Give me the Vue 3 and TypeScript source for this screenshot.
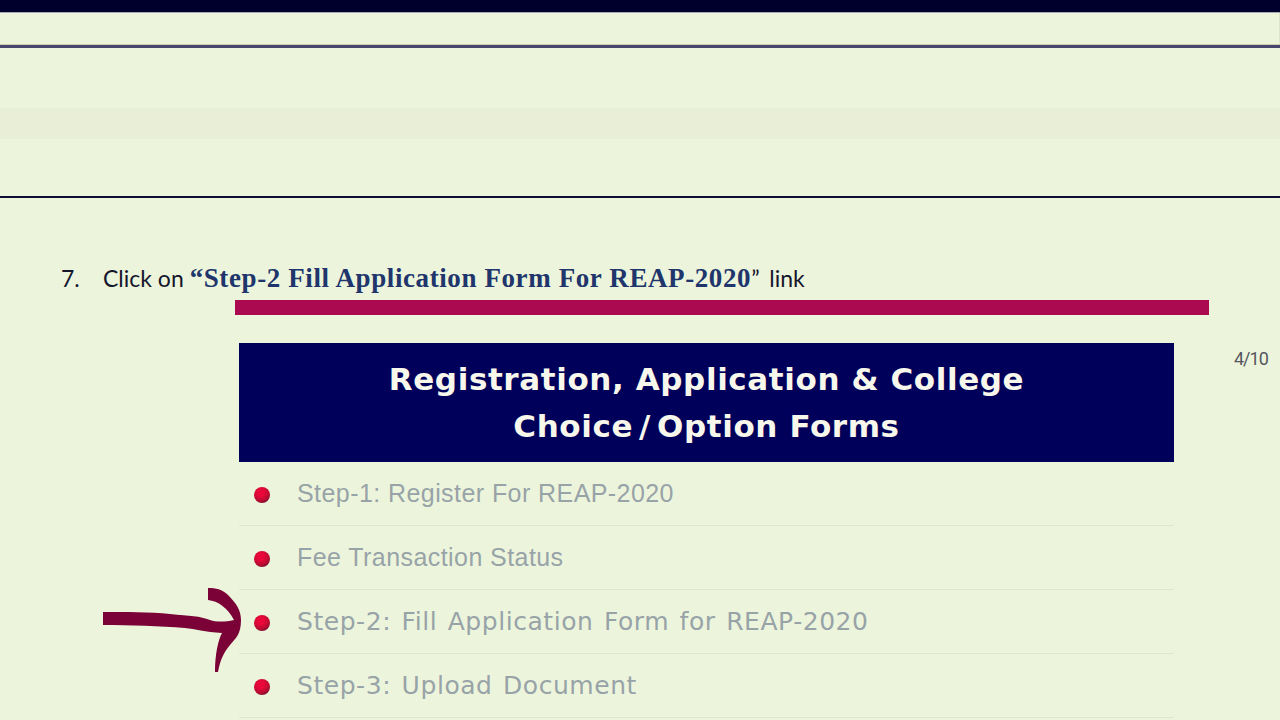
<script setup lang="ts">
interface Row { label: string; wide?: boolean; arrow?: boolean }
const rows: Row[] = [
  { label: 'Step-1: Register For REAP-2020' },
  { label: 'Fee Transaction Status' },
  { label: 'Step-2: Fill Application Form for REAP-2020', wide: true, arrow: true },
  { label: 'Step-3: Upload Document', wide: true },
]
</script>

<template>
  <div class="page">
    <div class="topbar"></div>
    <div class="band-a"></div>
    <div class="band-b"></div>
    <div class="band-c"></div>
    <div class="band-d"></div>
    <section class="content">
      <p class="instruction">
        <span class="num">7.</span>
        <span>Click on <b class="strong">“Step-2 Fill Application Form For REAP-2020</b>” <span class="link">link</span></span>
      </p>
      <div class="crimson"></div>
      <div class="panel">
        <h1 class="heading">Registration, Application &amp; College<br />Choice<span class="slash">/</span>Option Forms</h1>
        <ul class="list">
          <li v-for="row in rows" :key="row.label" class="row">
            <svg v-if="row.arrow" class="arrow" viewBox="100 585 145 90" width="145" height="90">
              <path d="M103 612 L103 625 C130 625 160 626 185 628 C195 629 205 632 222 633 C218 640 215 655 215 672 L218 672 C220 660 224 652 230 645 C236 638 241 634 241 620 C241 610 236 603 228 595 C222 589 216 588 208 588 L208 600 C218 601 228 608 234 620 C225 622 216 622 210 620 C200 616 190 616 170 614 C150 612 125 612 103 612 Z" fill="#7a0236" />
            </svg>
            <span class="bullet"></span>
            <span class="label" :class="{ wide: row.wide }">{{ row.label }}</span>
          </li>
        </ul>
      </div>
      <span class="pager">4/10</span>
    </section>
  </div>
</template>

<style>
html, body { margin: 0; overflow: hidden; background: #ecf5dc; }
</style>

<style scoped>
.page {
  width: 1280px;
  height: 720px;
  overflow: hidden;
  background: #ecf5dc;
  font-family: "Lato", sans-serif;
}
.topbar { height: 12px; background: #00002c; border-bottom: 1px solid #a9a9b4; }
.band-a {
  height: 32px;
  border-bottom: 3px solid #45456e;
  box-shadow: inset 0 -1px 0 #d0d0b0, inset -1px 0 0 #dde6c8;
}
.band-b { height: 60px; }
.band-c { height: 31px; background: #e9eed6; }
.band-d { height: 57px; border-bottom: 2px solid #0f0f35; }
.content { position: relative; }
.instruction {
  margin: 0;
  padding: 62px 0 0 61px;
  height: 40px;
  display: flex;
  align-items: baseline;
  font-size: 23px;
  line-height: 36px;
  color: #15152c;
  white-space: nowrap;
}
.num { width: 42px; }
.strong {
  font-family: "Liberation Serif", serif;
  font-size: 27px;
  letter-spacing: 0.6px;
  color: #20356b;
}
.link { margin-left: 4px; }
.crimson {
  height: 15px;
  margin: 0 71px 0 235px;
  background: #ac0a50;
}
.panel { width: 935px; margin: 28px 0 0 239px; }
.heading {
  margin: 0;
  height: 119px;
  padding-top: 13px;
  box-sizing: border-box;
  background: #00005a;
  color: #f7f7ec;
  text-align: center;
  font-family: "DejaVu Sans", sans-serif;
  font-size: 31px;
  line-height: 47px;
  font-weight: 700;
  letter-spacing: 0.6px;
  white-space: nowrap;
}
.slash { padding: 0 6px; }
.list { list-style: none; margin: 0; padding: 0; }
.row {
  position: relative;
  height: 64px;
  box-sizing: border-box;
  display: flex;
  align-items: center;
  border-bottom: 1px solid #e0e6cc;
}
.bullet {
  width: 16px;
  height: 16px;
  margin: 3px 0 0 15px;
  border-radius: 50%;
  flex: none;
  background: radial-gradient(circle at 42% 35%, #e8083a 25%, #b80a30 60%, #2a0f35 100%);
}
.label {
  margin-left: 27px;
  font-family: "Liberation Sans", sans-serif;
  font-size: 25px;
  letter-spacing: 0.43px;
  color: #98a3a8;
  white-space: nowrap;
}
.wide {
  font-family: "DejaVu Sans", sans-serif;
  letter-spacing: 0.55px;
  word-spacing: 2px;
}
.arrow { position: absolute; left: -139px; top: -5px; }
.pager {
  position: absolute;
  left: 1234px;
  top: 150px;
  font-family: "Roboto", sans-serif;
  font-size: 18px;
  letter-spacing: -1px;
  color: #55555f;
}
</style>
